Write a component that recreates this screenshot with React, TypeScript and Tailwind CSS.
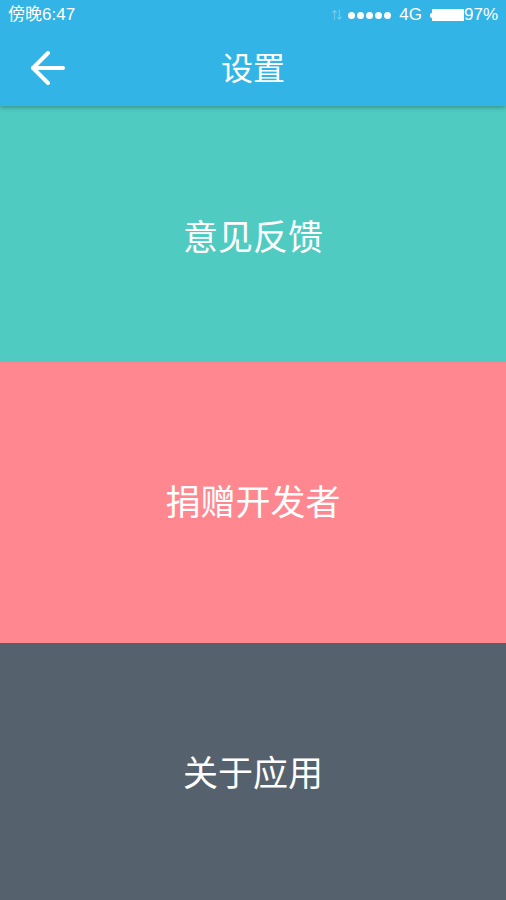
const font = { fontFamily: '"Helvetica Neue", "Liberation Sans", "Noto Sans CJK SC", sans-serif' };

const BackArrow = () => (
  <svg width="36" height="36" viewBox="0 0 36 36" fill="none" stroke="white" strokeWidth="4" strokeLinecap="round" strokeLinejoin="round">
    <path d="M3 18H33" />
    <path d="M18 3L3 18L18 33" />
  </svg>
);

const StatusBar = () => (
  <div className="flex h-[30px] items-center justify-between pl-[8px] pr-[8px] text-[17px] text-white">
    <span>傍晚6:47</span>
    <div className="flex items-center gap-[6px]">
      <span className="text-[11px] text-white/40">⇅</span>
      <div className="flex items-center gap-[2px]">
        {[0, 1, 2, 3, 4].map((i) => (
          <span key={i} className="block h-[7px] w-[7px] rounded-full bg-white" />
        ))}
      </div>
      <span className="ml-[2px]">4G</span>
      <div className="ml-[2px] flex items-center">
        <span className="block h-[5px] w-[2px] rounded-l-sm bg-white" />
        <span className="block h-[12px] w-[32px] bg-white" />
      </div>
      <span className="-ml-[6px]">97%</span>
    </div>
  </div>
);

const Block = ({ label, className }: { label: string; className: string }) => (
  <div className={`flex items-center justify-center text-[35px] text-white ${className}`}>
    <span className="leading-none">{label}</span>
  </div>
);

const App = () => {
  return (
    <div className="flex h-[900px] w-full flex-col overflow-hidden bg-[#56616e]" style={font}>
      <header className="relative z-10 bg-[#33b4e6] shadow-[0_2px_4px_rgba(0,0,0,0.25)]">
        <StatusBar />
        <div className="relative flex h-[76px] items-center justify-center">
          <button className="absolute left-[30px] top-[20px]">
            <BackArrow />
          </button>
          <h1 className="pt-[2px] text-[32px] text-white">设置</h1>
        </div>
      </header>
      <Block label="意见反馈" className="h-[256px] bg-[#4fcbc2] pt-[6px]" />
      <Block label="捐赠开发者" className="h-[281px] bg-[#ff8890]" />
      <Block label="关于应用" className="flex-1 bg-[#56616e] pt-[4px]" />
    </div>
  );
};

export default App;
